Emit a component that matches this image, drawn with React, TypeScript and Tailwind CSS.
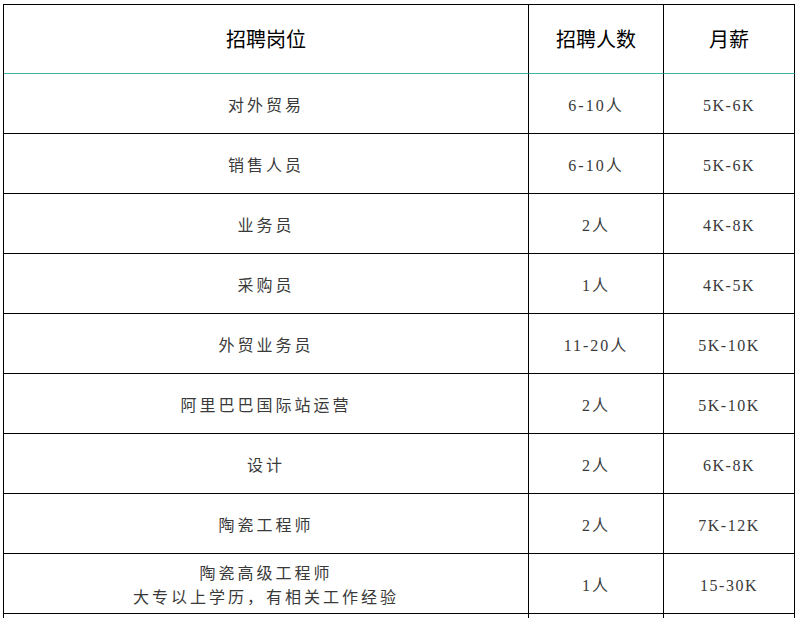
import React from "react";

const rows: { name: string[]; count: string; pay: string }[] = [
  { name: ["对外贸易"], count: "6-10人", pay: "5K-6K" },
  { name: ["销售人员"], count: "6-10人", pay: "5K-6K" },
  { name: ["业务员"], count: "2人", pay: "4K-8K" },
  { name: ["采购员"], count: "1人", pay: "4K-5K" },
  { name: ["外贸业务员"], count: "11-20人", pay: "5K-10K" },
  { name: ["阿里巴巴国际站运营"], count: "2人", pay: "5K-10K" },
  { name: ["设计"], count: "2人", pay: "6K-8K" },
  { name: ["陶瓷工程师"], count: "2人", pay: "7K-12K" },
  { name: ["陶瓷高级工程师", "大专以上学历，有相关工作经验"], count: "1人", pay: "15-30K" },
  { name: [], count: "", pay: "" },
];

export default function App() {
  return (
    <div className="w-[799px] h-[618px] overflow-hidden bg-white">
      <div className="pt-[4px] pl-[3px]">
        <div className="w-[792px] border-t border-l border-black">
          <div className="flex h-[69px] text-[20px] text-black [font-family:'Noto_Sans_CJK_SC','Noto_Sans',sans-serif]">
            <div className="w-[525px] flex items-center justify-center border-r border-black border-b border-b-[#3fb3a9]">
              招聘岗位
            </div>
            <div className="w-[135px] flex items-center justify-center border-r border-black border-b border-b-[#3fb3a9]">
              招聘人数
            </div>
            <div className="w-[131px] flex items-center justify-center border-r border-black border-b border-b-[#3fb3a9]">
              月薪
            </div>
          </div>
          {rows.map((r, i) => (
            <div
              key={i}
              className="flex h-[60px] text-[16px] text-[#3a3a3a] [font-family:'Liberation_Serif','Noto_Sans_CJK_SC',serif]"
            >
              <div className="w-[525px] flex flex-col items-center justify-center border-r border-b border-black leading-[24px] pt-[4px] tracking-[3px]">
                {r.name.map((n, j) => (
                  <span key={j}>{n}</span>
                ))}
              </div>
              <div className="w-[135px] flex items-center justify-center border-r border-b border-black pt-[4px] tracking-[2px]">
                {r.count}
              </div>
              <div className="w-[131px] flex items-center justify-center border-r border-b border-black pt-[4px] tracking-[1.5px]">
                {r.pay}
              </div>
            </div>
          ))}
        </div>
      </div>
    </div>
  );
}
